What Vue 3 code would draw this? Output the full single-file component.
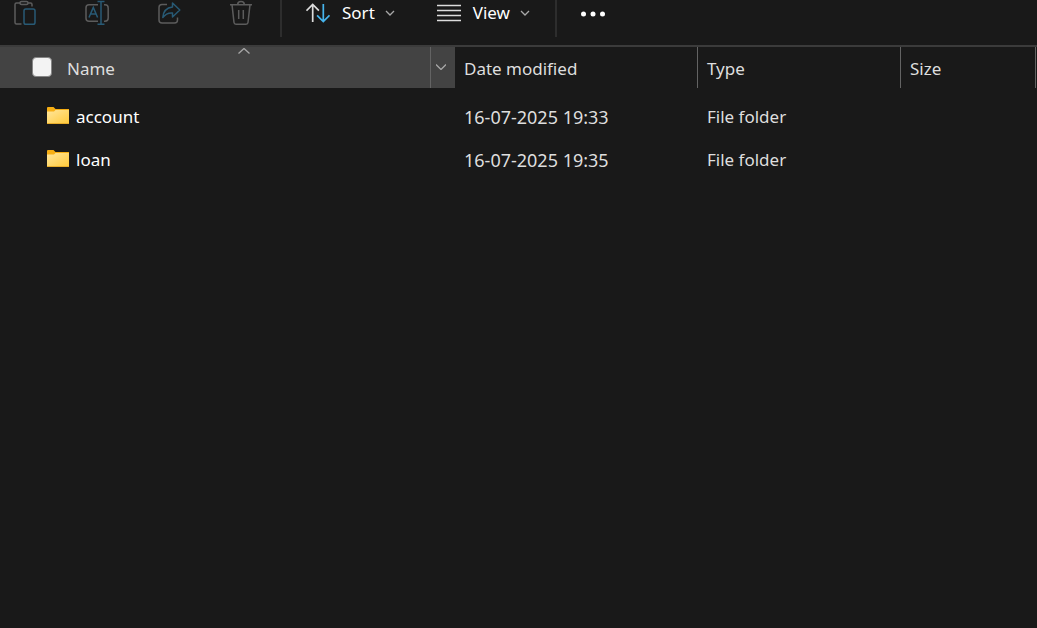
<script setup>
const folders = [
  { name: 'account', modified: '16-07-2025 19:33', type: 'File folder', size: '' },
  { name: 'loan', modified: '16-07-2025 19:35', type: 'File folder', size: '' },
]
</script>

<template>
  <main class="explorer">
    <div class="toolbar" role="toolbar" aria-label="File commands">
      <div class="group actions">
        <button type="button" class="tool" aria-label="Paste" disabled>
          <svg width="24" height="26" viewBox="0 0 24 26" fill="none" stroke-width="1.5">
            <path class="dim" d="M7 3H3.500Q2 3 2 4.500V22.500Q2 24 3.500 24H8.500M15 3H17.500Q19 3 19 4.500V6.500" />
            <rect class="dim" x="7" y="1.500" width="8" height="3" rx="1.500" />
            <rect class="blue-dim" x="11" y="9" width="11" height="15.200" rx="1.800" />
          </svg>
        </button>
        <button type="button" class="tool" aria-label="Rename" disabled>
          <svg width="24" height="26" viewBox="0 0 24 26" fill="none" stroke-width="1.500">
            <path class="dim" d="M13 4.700H4Q1 4.700 1 7.700V18.300Q1 21.300 4 21.300H13M19 4.700H20Q23.200 4.700 23.200 7.900V18.100Q23.200 21.300 20 21.300H19" />
            <path class="blue-dim" d="M12.500 1.500H19.500M16 1.500V24.300M12.500 24.300H19.500M4 17.500L8.300 7.500L12.600 17.500M5.500 14H11.100" />
          </svg>
        </button>
        <button type="button" class="tool" aria-label="Share" disabled>
          <svg width="24" height="26" viewBox="0 0 24 26" fill="none" stroke-width="1.500" stroke-linejoin="round">
            <path class="dim" d="M10 4.500H5Q2 4.500 2 7.500V20Q2 23 5 23H17.500Q20.500 23 20.500 20V17.500" />
            <path class="blue-dim" d="M15.500 3L22.800 10L15.500 17V13Q9.500 12.500 5.800 17.500Q6.500 8 15.500 7Z" />
          </svg>
        </button>
        <button type="button" class="tool" aria-label="Delete" disabled>
          <svg width="24" height="26" viewBox="0 0 24 26" fill="none" stroke-width="1.500">
            <path class="dim" d="M1 4.700H23M8.700 4.500Q8.700 1.500 12 1.500Q15.300 1.500 15.300 4.500M3 4.700L5 22.500Q5.200 24.300 7 24.300H17Q18.800 24.300 19 22.500L21 4.700M9.700 10V19M14.300 10V19" />
          </svg>
        </button>
      </div>
      <div class="group menus">
        <button type="button" class="menu" aria-haspopup="true">
          <svg width="24" height="26" viewBox="0 0 24 26" fill="none" stroke-width="1.700">
            <path class="light" d="M6.700 22V5M0.500 10.700L6.700 4.500L12.900 10.700" />
            <path class="blue" d="M17.300 4V21M11.100 15.300L17.300 21.500L23.500 15.300" />
          </svg>
          <span class="label">Sort</span>
          <svg class="chevron" width="10" height="6" viewBox="0 0 10 6"><path d="M1 1L5 5L9 1" /></svg>
        </button>
        <button type="button" class="menu" aria-haspopup="true">
          <svg width="24" height="26" viewBox="0 0 24 26" stroke-width="1.400">
            <path class="light" d="M0 5.500H24M0 10.500H24M0 15.500H24M0 20.500H24" />
          </svg>
          <span class="label">View</span>
          <svg class="chevron" width="10" height="6" viewBox="0 0 10 6"><path d="M1 1L5 5L9 1" /></svg>
        </button>
      </div>
      <button type="button" class="tool" aria-label="See more">
        <svg width="24" height="26" viewBox="0 0 24 26" fill="#fff">
          <circle cx="2.500" cy="14" r="2.500" /><circle cx="12" cy="14" r="2.500" /><circle cx="21.500" cy="14" r="2.500" />
        </svg>
      </button>
    </div>

    <table class="files">
      <colgroup>
        <col class="col-name" />
        <col class="col-date" />
        <col class="col-type" />
        <col />
      </colgroup>
      <thead>
        <tr>
          <th scope="col" class="sorted" aria-sort="ascending">
            <div class="name-head">
              <input type="checkbox" class="select-all" aria-label="Select all items" />
              <span>Name</span>
              <svg class="sort-mark" width="12" height="6" viewBox="0 0 12 6"><path d="M0.500 5.500L6 0.500L11.500 5.500" /></svg>
              <button type="button" class="filter" aria-label="Filter by name">
                <svg class="chevron" width="10" height="6" viewBox="0 0 10 6"><path d="M0 0.500L5 5.500L10 0.500" /></svg>
              </button>
            </div>
          </th>
          <th scope="col">Date modified</th>
          <th scope="col">Type</th>
          <th scope="col">Size</th>
        </tr>
      </thead>
      <tbody>
        <tr v-for="folder in folders" :key="folder.name">
          <td>
            <div class="file-name">
              <svg width="22" height="18" viewBox="0 0 22 18">
                <defs>
                  <linearGradient :id="`fold-${folder.name}`" x1="0" y1="0" x2="1" y2="1">
                    <stop offset="0" stop-color="#ffe69c" />
                    <stop offset="1" stop-color="#ffca3d" />
                  </linearGradient>
                </defs>
                <path fill="#f6ae14" d="M0 1Q0 0 1 0H6.500L8.500 2H22V17H0Z" />
                <path :fill="`url(#fold-${folder.name})`" d="M0 4.500H7L8.500 3H22V16H0Z" />
                <path fill="#e8ad2b" d="M0 16H22V17H0Z" />
              </svg>
              <span>{{ folder.name }}</span>
            </div>
          </td>
          <td class="date">{{ folder.modified }}</td>
          <td>{{ folder.type }}</td>
          <td>{{ folder.size }}</td>
        </tr>
      </tbody>
    </table>
  </main>
</template>

<style>
html,
body {
  background: #191919;
}
</style>

<style scoped>
.explorer {
  min-height: 100vh;
  background: #191919;
  color: #dedede;
  font-family: "Segoe UI", "Noto Sans", "Open Sans", sans-serif;
  font-size: 17px;
  line-height: 26px;
}
button {
  padding: 0;
  border: 0;
  background: none;
  color: #fff;
  font: inherit;
}
svg {
  display: block;
  flex: none;
}
.toolbar {
  display: flex;
  align-items: flex-start;
  height: 45px;
  padding-left: 13px;
  border-bottom: 2px solid #3b3b3b;
}
.group {
  display: flex;
  height: 37px;
  align-items: flex-start;
  border-right: 2px solid #2d2d2d;
  margin-right: 24px;
}
.actions {
  gap: 48px;
  padding-right: 27px;
}
.menus {
  gap: 42px;
  padding-right: 25px;
}
.tool {
  width: 24px;
  height: 26px;
}
.menu {
  display: flex;
  align-items: center;
  height: 26px;
}
.label {
  margin: 0 10px 0 12px;
}
.dim {
  stroke: #5c5c5c;
}
.blue-dim {
  stroke: #285a75;
}
.light {
  stroke: #dcdcdc;
}
.blue {
  stroke: #46b4ec;
}
.chevron path,
.sort-mark path {
  fill: none;
  stroke: #a8a8a8;
  stroke-width: 1.3;
}
.files {
  width: calc(100% - 1px);
  table-layout: fixed;
  border-collapse: separate;
  border-spacing: 0;
}
.col-name {
  width: 455px;
}
.col-date {
  width: 243px;
}
.col-type {
  width: 203px;
}
th,
td {
  height: 43px;
  padding: 0 9px;
  font-weight: 400;
  text-align: left;
  box-sizing: border-box;
}
th {
  height: 41px;
  padding-top: 2px;
  border-right: 1px solid #636363;
}
th.sorted {
  padding: 0;
  border: 0;
  background: #434343;
}
.date {
  font-size: 18px;
}
.name-head {
  position: relative;
  display: flex;
  align-items: center;
  height: 41px;
  padding-left: 32px;
}
.name-head span {
  margin-left: 15px;
  padding-top: 2px;
}
.select-all {
  appearance: none;
  width: 20px;
  height: 20px;
  margin: 0 0 1px;
  border: 1px solid #858585;
  border-radius: 4px;
  background: #f3f3f3;
}
.sort-mark {
  position: absolute;
  top: 1px;
  left: calc(50% + 10px);
}
.filter {
  display: flex;
  align-items: center;
  justify-content: center;
  width: 25px;
  height: 41px;
  margin-left: auto;
  padding-right: 4px;
  padding-bottom: 1px;
  border-left: 1px solid #636363;
}
tbody::before {
  content: "";
  display: table-row;
  height: 7px;
}
.file-name {
  display: flex;
  align-items: center;
  gap: 7px;
  padding-left: 38px;
  color: #fff;
}
.file-name svg {
  margin-bottom: 2px;
}
</style>
